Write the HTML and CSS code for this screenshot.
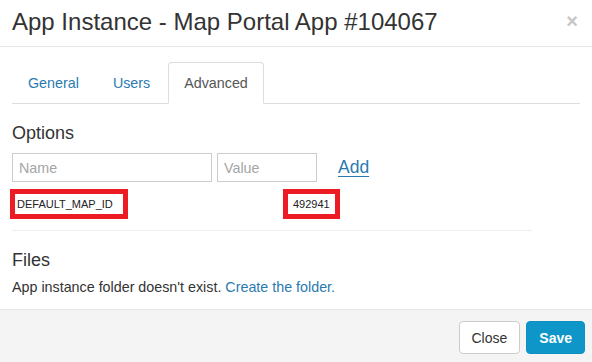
FILE: index.html
```html
<!DOCTYPE html>
<html>
<head>
    <meta charset="UTF-8">
    <title>App Instance</title>
    <link rel="stylesheet" href="styles.css">
</head>
<body>
    <div class="modal">
        <div class="modal-header">
            <h3 class="modal-title">App Instance - Map Portal App #104067</h3>
            <span class="close">×</span>
        </div>

        <div class="modal-body">
            <ul class="nav-tabs">
                <li><a href="#">General</a></li>
                <li><a href="#">Users</a></li>
                <li class="active"><a href="#">Advanced</a></li>
            </ul>

            <div class="tab-pane">
                <h4>Options</h4>
                <div class="option-form">
                    <input type="text" class="input-name" placeholder="Name">
                    <input type="text" class="input-value" placeholder="Value">
                    <a href="#" class="add-link">Add</a>
                </div>

                <div class="option-row">
                    <span class="opt-name marked">DEFAULT_MAP_ID</span>
                    <span class="opt-value marked">492941</span>
                </div>

                <hr class="divider">

                <h4>Files</h4>
                <p class="files-text">App instance folder doesn't exist. <a href="#">Create the folder.</a></p>
            </div>
        </div>

        <div class="modal-footer">
            <button class="btn btn-default">Close</button>
            <button class="btn btn-primary">Save</button>
        </div>
    </div>
</body>
</html>
```

FILE: styles.css
```css
body {
    margin: 0;
    font-family: "Liberation Sans", Arial, sans-serif;
    font-size: 14.3px;
    color: #333;
    background: #fff;
}

a {
    color: #2a7ab0;
    text-decoration: none;
}

.modal {
    display: flex;
    flex-direction: column;
    min-height: 100vh;
}

/* Шапка */
.modal-header {
    display: flex;
    justify-content: space-between;
    align-items: flex-start;
    padding: 8px 14px 10px 12px;
    border-bottom: 1px solid #e5e5e5;
}

.modal-title {
    margin: 0;
    font-size: 24px;
    font-weight: normal;
    line-height: 28px;
    color: #333;
}

.close {
    font-size: 20px;
    font-weight: bold;
    line-height: 20px;
    color: #c6c6c6;
    margin-top: 3px;
    cursor: pointer;
}

/* Тело */
.modal-body {
    padding: 15px 12px 12px 12px;
}

.nav-tabs {
    display: flex;
    list-style: none;
    margin: 0;
    padding: 0;
    border-bottom: 1px solid #ddd;
}

.nav-tabs li {
    margin-right: 2px;
    margin-bottom: -1px;
}

.nav-tabs a {
    display: block;
    padding: 10px 15px;
    line-height: 20px;
    border: 1px solid transparent;
    border-radius: 4px 4px 0 0;
}

.nav-tabs .active a {
    color: #555;
    background: #fff;
    border-color: #ddd #ddd transparent;
}

h4 {
    font-size: 18px;
    font-weight: normal;
    line-height: 20px;
    margin: 19px 0 0;
    color: #333;
}

.option-form {
    display: flex;
    align-items: center;
    margin-top: 10px;
}

.option-form input {
    box-sizing: border-box;
    height: 29px;
    border: 1px solid #ccc;
    border-radius: 0;
    padding: 0 6px;
    font-family: inherit;
    font-size: 14.3px;
    color: #333;
}

.option-form input::placeholder {
    color: #a5a5a5;
}

.input-name {
    width: 200px;
}

.input-value {
    width: 100px;
    margin-left: 5px;
}

.add-link {
    margin-left: 21px;
    font-size: 17.5px;
    text-decoration: underline;
    text-underline-offset: 3px;
}

.option-row {
    display: flex;
    align-items: center;
    margin: 7px 0 0 -2px;
}

.marked {
    border: 5px solid #ed1c24;
    font-size: 11px;
    line-height: 20px;
    color: #222;
}

.opt-name {
    width: 98px;
    padding: 0 8px 0 2px;
}

.opt-value {
    margin-left: 155px;
    padding: 0 5px;
}

.divider {
    width: 520px;
    margin: 11px 0 0;
    border: 0;
    border-top: 1px solid #eee;
}

.files-text {
    margin: 7px 0 0;
    line-height: 20px;
}

/* Подвал */
.modal-footer {
    flex: 1;
    display: flex;
    justify-content: flex-end;
    align-items: flex-start;
    gap: 6px;
    padding: 11px 7px 0 0;
    background: #f4f4f4;
    border-top: 1px solid #e5e5e5;
}

.btn {
    box-sizing: border-box;
    height: 33px;
    padding: 0 12px;
    font-family: inherit;
    font-size: 14px;
    border-radius: 4px;
    cursor: pointer;
}

.btn-default {
    background: #fff;
    color: #333;
    border: 1px solid #ccc;
}

.btn-primary {
    background: #0e96c8;
    color: #fff;
    font-weight: bold;
    border: 1px solid #0e90c0;
}
```
